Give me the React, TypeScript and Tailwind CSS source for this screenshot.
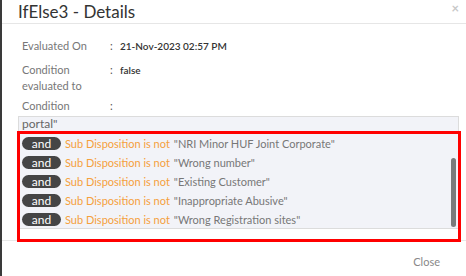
const rows = [
  "NRI Minor HUF Joint Corporate",
  "Wrong number",
  "Existing Customer",
  "Inappropriate Abusive",
  "Wrong Registration sites",
];

function InfoRow({ label, value }: { label: React.ReactNode; value?: string }) {
  return (
    <div className="flex text-[11px] leading-[16px]">
      <div className="w-[88px] text-[#777]">{label}</div>
      <div className="w-[10px] text-[#555]">:</div>
      <div className="text-[10px] font-semibold text-[#333]">{value}</div>
    </div>
  );
}

export default function App() {
  return (
    <div
      className="relative flex h-[276px] w-[466px] flex-col overflow-hidden border-l-2 border-[#3a3a3a] bg-white"
      style={{ fontFamily: 'Lato, "Open Sans", sans-serif' }}
    >
      <div className="flex h-[24px] items-center justify-between border-b border-[#e6e6e6] pl-[16px] pr-[7px]">
        <h2 className="text-[17px] leading-[22px] text-[#333]">IfElse3 - Details</h2>
        <span className="mt-[-6px] text-[13px] font-bold text-[#c8c8c8]">×</span>
      </div>

      <div className="flex flex-col pl-[20px] pr-[7px] pt-[14px]">
        <InfoRow label="Evaluated On" value="21-Nov-2023 02:57 PM" />
        <div className="mt-[8px]">
          <InfoRow
            label={
              <>
                Condition
                <br />
                evaluated to
              </>
            }
            value="false"
          />
        </div>
        <div className="mt-[4px]">
          <InfoRow label="Condition" />
        </div>

        <div className="ml-[-4px] mt-[2px] flex h-[113px] border border-[#dcdcdc] bg-[#f2f3f8]">
          <div className="flex flex-1 flex-col pl-[3px]">
            <div className="h-[14px] text-[12px] leading-[14px] text-[#666]">portal"</div>
            <div className="mt-[6px] flex flex-col gap-[6px]">
              {rows.map((r) => (
                <div key={r} className="flex items-center text-[11px] leading-[13px]">
                  <span className="flex h-[13px] w-[39px] items-center justify-center rounded-full bg-[#454545] text-[12px] text-white">
                    and
                  </span>
                  <span className="ml-[4px] text-[#f5a03c]">Sub Disposition is not</span>
                  <span className="ml-[4px] text-[#777]">"{r}"</span>
                </div>
              ))}
            </div>
          </div>
          <div className="w-[8px] pl-[1px] pt-[41px]">
            <div className="h-[69px] w-[5px] rounded-full bg-[#7a7a7a]" />
          </div>
        </div>
      </div>

      <div className="mt-[11px] flex flex-1 items-center justify-end border-t border-[#e8e8e8] pr-[26px]">
        <span className="mt-[8px] text-[11px] text-[#888]">Close</span>
      </div>

      <div className="pointer-events-none absolute left-[15px] top-[131px] h-[111px] w-[444px] border-[3px] border-[#ff0000]" />
    </div>
  );
}
